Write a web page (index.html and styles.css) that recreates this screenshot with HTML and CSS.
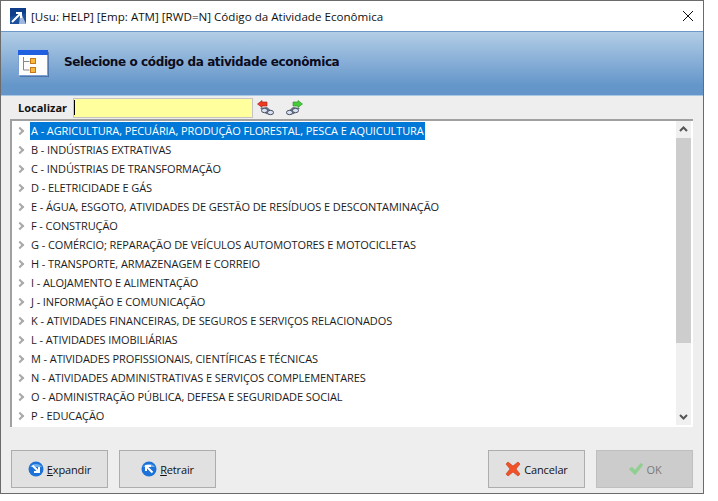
FILE: index.html
```html
<!DOCTYPE html>
<html lang="pt">
<head>
<meta charset="utf-8">
<title>Código da Atividade Econômica</title>
<link rel="stylesheet" href="styles.css">
</head>
<body>
<div class="window">
  <div class="titlebar">
    <svg class="app-icon" width="16" height="16" viewBox="0 0 16 16"><rect width="16" height="16" fill="#1c4f9c"/><path d="M0 0h16v5L0 9z" fill="#0f3d8a"/><path d="M10 8l2-1 4 9H9z" fill="#9fb8dc"/><path d="M2 14L10 6M6 5h5v5" fill="none" stroke="#fff" stroke-width="2"/></svg>
    <span class="title-text">[Usu: HELP] [Emp: ATM] [RWD=N] Código da Atividade Econômica</span>
    <svg class="close" width="12" height="12" viewBox="0 0 12 12"><path d="M1 1l10 10M11 1L1 11" stroke="#111" stroke-width="1" fill="none"/></svg>
  </div>
  <div class="banner">
    <svg class="banner-icon" width="31" height="28" viewBox="0 0 31 28"><rect x="0.500" y="0.500" width="29" height="25" rx="1" fill="#fdfdfd" stroke="#7d9fd4"/><rect x="30" y="2" width="1" height="25" fill="#3f6299" opacity=".7"/><rect x="2" y="26" width="29" height="1" fill="#3f6299" opacity=".7"/><rect x="0" y="0" width="30" height="5" fill="#1f5fe0"/><path d="M5.500 7v13h6M5.500 11.500h6" stroke="#888" fill="none"/><rect x="12.500" y="8.500" width="5" height="5" fill="#f8b93e" stroke="#c6781a"/><rect x="12.500" y="17.500" width="5" height="5" fill="#f8b93e" stroke="#c6781a"/></svg>
    <span class="banner-text">Selecione o código da atividade econômica</span>
  </div>
  <div class="search">
    <label class="search-label">Localizar</label>
    <div class="search-input"><span class="caret"></span></div>
    <svg class="search-btn" width="18" height="16" viewBox="0 0 18 16"><path d="M3 8l7-1 7 6-3 2-5-1z" fill="#6b7284"/><ellipse cx="7.500" cy="10.500" rx="3" ry="2.200" fill="#d6e2f4" stroke="#4a5060"/><ellipse cx="13.500" cy="12.500" rx="3" ry="2.200" fill="#d6e2f4" stroke="#4a5060"/><path d="M0.500 4l4.500-3.500V2h5v4H5v1.500z" fill="#ee3a22" stroke="#a51c10" stroke-width=".6"/></svg>
    <svg class="search-btn" width="18" height="16" viewBox="0 0 18 16"><path d="M15 8l-7-1-7 6 3 2 5-1z" fill="#6b7284"/><ellipse cx="10.500" cy="10.500" rx="3" ry="2.200" fill="#d6e2f4" stroke="#4a5060"/><ellipse cx="4.500" cy="12.500" rx="3" ry="2.200" fill="#d6e2f4" stroke="#4a5060"/><path d="M17.500 4l-4.500-3.500V2H8v4h5v1.500z" fill="#46cc3a" stroke="#218a1c" stroke-width=".6"/></svg>
  </div>
  <div class="tree">
    <ul class="tree-list">
      <li class="row"><span class="chev"></span><span class="label selected">A - AGRICULTURA, PECUÁRIA, PRODUÇÃO FLORESTAL, PESCA E AQUICULTURA</span></li>
      <li class="row"><span class="chev"></span><span class="label">B - INDÚSTRIAS EXTRATIVAS</span></li>
      <li class="row"><span class="chev"></span><span class="label">C - INDÚSTRIAS DE TRANSFORMAÇÃO</span></li>
      <li class="row"><span class="chev"></span><span class="label">D - ELETRICIDADE E GÁS</span></li>
      <li class="row"><span class="chev"></span><span class="label">E - ÁGUA, ESGOTO, ATIVIDADES DE GESTÃO DE RESÍDUOS E DESCONTAMINAÇÃO</span></li>
      <li class="row"><span class="chev"></span><span class="label">F - CONSTRUÇÃO</span></li>
      <li class="row"><span class="chev"></span><span class="label">G - COMÉRCIO; REPARAÇÃO DE VEÍCULOS AUTOMOTORES E MOTOCICLETAS</span></li>
      <li class="row"><span class="chev"></span><span class="label">H - TRANSPORTE, ARMAZENAGEM E CORREIO</span></li>
      <li class="row"><span class="chev"></span><span class="label">I - ALOJAMENTO E ALIMENTAÇÃO</span></li>
      <li class="row"><span class="chev"></span><span class="label">J - INFORMAÇÃO E COMUNICAÇÃO</span></li>
      <li class="row"><span class="chev"></span><span class="label">K - ATIVIDADES FINANCEIRAS, DE SEGUROS E SERVIÇOS RELACIONADOS</span></li>
      <li class="row"><span class="chev"></span><span class="label">L - ATIVIDADES IMOBILIÁRIAS</span></li>
      <li class="row"><span class="chev"></span><span class="label">M - ATIVIDADES PROFISSIONAIS, CIENTÍFICAS E TÉCNICAS</span></li>
      <li class="row"><span class="chev"></span><span class="label">N - ATIVIDADES ADMINISTRATIVAS E SERVIÇOS COMPLEMENTARES</span></li>
      <li class="row"><span class="chev"></span><span class="label">O - ADMINISTRAÇÃO PÚBLICA, DEFESA E SEGURIDADE SOCIAL</span></li>
      <li class="row"><span class="chev"></span><span class="label">P - EDUCAÇÃO</span></li>
    </ul>
    <div class="scrollbar">
      <svg class="arrow" width="15" height="17" viewBox="0 0 15 17"><path d="M4 10l3.500-3.500L11 10" stroke="#555" stroke-width="2" fill="none"/></svg>
      <div class="track"><div class="thumb"></div></div>
      <svg class="arrow" width="15" height="17" viewBox="0 0 15 17"><path d="M4 7l3.500 3.500L11 7" stroke="#555" stroke-width="2" fill="none"/></svg>
    </div>
  </div>
  <div class="footer">
    <div class="btn"><svg width="16" height="16" viewBox="0 0 16 16"><circle cx="8" cy="8" r="7.500" fill="#1d72d8"/><path d="M2 6a7 6 0 0 1 12 0z" fill="#6fb0ee"/><path d="M4.500 4.500l6 6M11 6v5H6" stroke="#fff" stroke-width="2" fill="none"/></svg><span><u>E</u>xpandir</span></div>
    <div class="btn"><svg width="16" height="16" viewBox="0 0 16 16"><circle cx="8" cy="8" r="7.500" fill="#1d72d8"/><path d="M2 6a7 6 0 0 1 12 0z" fill="#6fb0ee"/><path d="M11.500 11.500l-6-6M5 10V5h5" stroke="#fff" stroke-width="2" fill="none"/></svg><span><u>R</u>etrair</span></div>
    <div class="spacer"></div>
    <div class="btn"><svg width="16" height="16" viewBox="0 0 16 16"><path d="M1 3l2-2 5 4 5-4 2 2-4 5 4 5-2 2-5-4-5 4-2-2 4-5z" fill="#f0532a" stroke="#c23a18" stroke-width=".6"/></svg><span>Cancelar</span></div>
    <div class="btn btn-disabled"><svg width="16" height="14" viewBox="0 0 16 14"><path d="M1 7l3-2 3 3 6-7 2 2-8 10z" fill="#8fd08f" stroke="#a4c8a4" stroke-width=".6"/></svg><span>OK</span></div>
  </div>
</div>
</body>
</html>
```
FILE: styles.css
```css
* { box-sizing: border-box; }
html, body { margin: 0; padding: 0; background: #fff; }
.window {
  width: 704px;
  height: 494px;
  border: 1px solid #6b6b6b;
  background: #eeeeee;
  display: flex;
  flex-direction: column;
  font-family: "Open Sans", "Liberation Sans", sans-serif;
  font-size: 11px;
  color: #111;
}
.titlebar {
  height: 30px;
  background: #fff;
  display: flex;
  align-items: center;
  padding: 0 0 0 9px;
  flex: none;
}
.app-icon { flex: none; }
.title-text {
  margin-left: 5px;
  font-size: 11.6px;
  flex: 1;
  color: #111;
}
.close { margin-right: 9px; flex: none; }
.banner {
  height: 65px;
  flex: none;
  border-top: 1px solid #6b97c9;
  border-bottom: 1px solid #a9c8e6;
  background: linear-gradient(#b3cde6, #6496ca 85%, #6496ca);
  display: flex;
  align-items: center;
  padding: 0 0 4px 17px;
}
.banner-icon { flex: none; margin-top: 5px; }
.banner-text {
  margin-left: 15px;
  font-family: "DejaVu Sans", sans-serif;
  font-weight: bold;
  font-size: 12px;
  letter-spacing: -0.39px;
  color: #0c0c20;
}
.search {
  height: 23px;
  flex: none;
  display: flex;
  align-items: center;
  padding-left: 17px;
}
.search-label {
  width: 55px;
  flex: none;
  font-weight: 700;
  font-size: 11px;
}
.search-input {
  width: 180px;
  height: 20px;
  flex: none;
  background: #ffff9e;
  border: 1px solid #c4c4c4;
  padding: 1px 0 2px 0;
}
.caret { display: block; width: 1px; height: 15px; background: #000; }
.search-btn { margin-left: 4px; flex: none; }
.search-btn + .search-btn { margin-left: 10px; }
.tree {
  margin: 0 10px 0 9px;
  height: 308px;
  flex: none;
  display: flex;
  background: #fff;
  border-top: 2px solid #a0a0a0;
  border-left: 2px solid #a0a0a0;
  padding-right: 2px;
}
.tree-list {
  list-style: none;
  margin: 0;
  padding: 0;
  flex: 1;
}
.row {
  height: 19px;
  display: flex;
  align-items: center;
  padding-left: 4px;
  white-space: nowrap;
  color: #1c1c1c;
  letter-spacing: -0.09px;
}
.chev {
  width: 6px;
  height: 6px;
  border-top: 2px solid #a9a9a9;
  border-right: 2px solid #a9a9a9;
  transform: rotate(45deg);
  flex: none;
  margin-right: 7px;
  margin-left: 1px;
}
.label { padding: 0 1px; line-height: 18px; }
.selected { background: #0078d7; color: #fff; }
.scrollbar {
  width: 15px;
  flex: none;
  display: flex;
  flex-direction: column;
  background: #f0f0f0;
  height: 304px;
}
.arrow { flex: none; }
.track { flex: 1; }
.thumb { height: 205px; background: #cdcdcd; }
.footer {
  flex: 1;
  display: flex;
  align-items: flex-start;
  padding: 23px 10px 0 10px;
  gap: 11px;
}
.spacer { flex: 1; }
.btn {
  width: 97px;
  height: 38px;
  border: 1px solid #adadad;
  background: #e1e1e1;
  display: flex;
  align-items: center;
  justify-content: center;
  gap: 3px;
  font-size: 11px;
  letter-spacing: -0.15px;
}
.btn-disabled { background: #cccccc; color: #7a7a7a; border-color: #bfbfbf; }
```
